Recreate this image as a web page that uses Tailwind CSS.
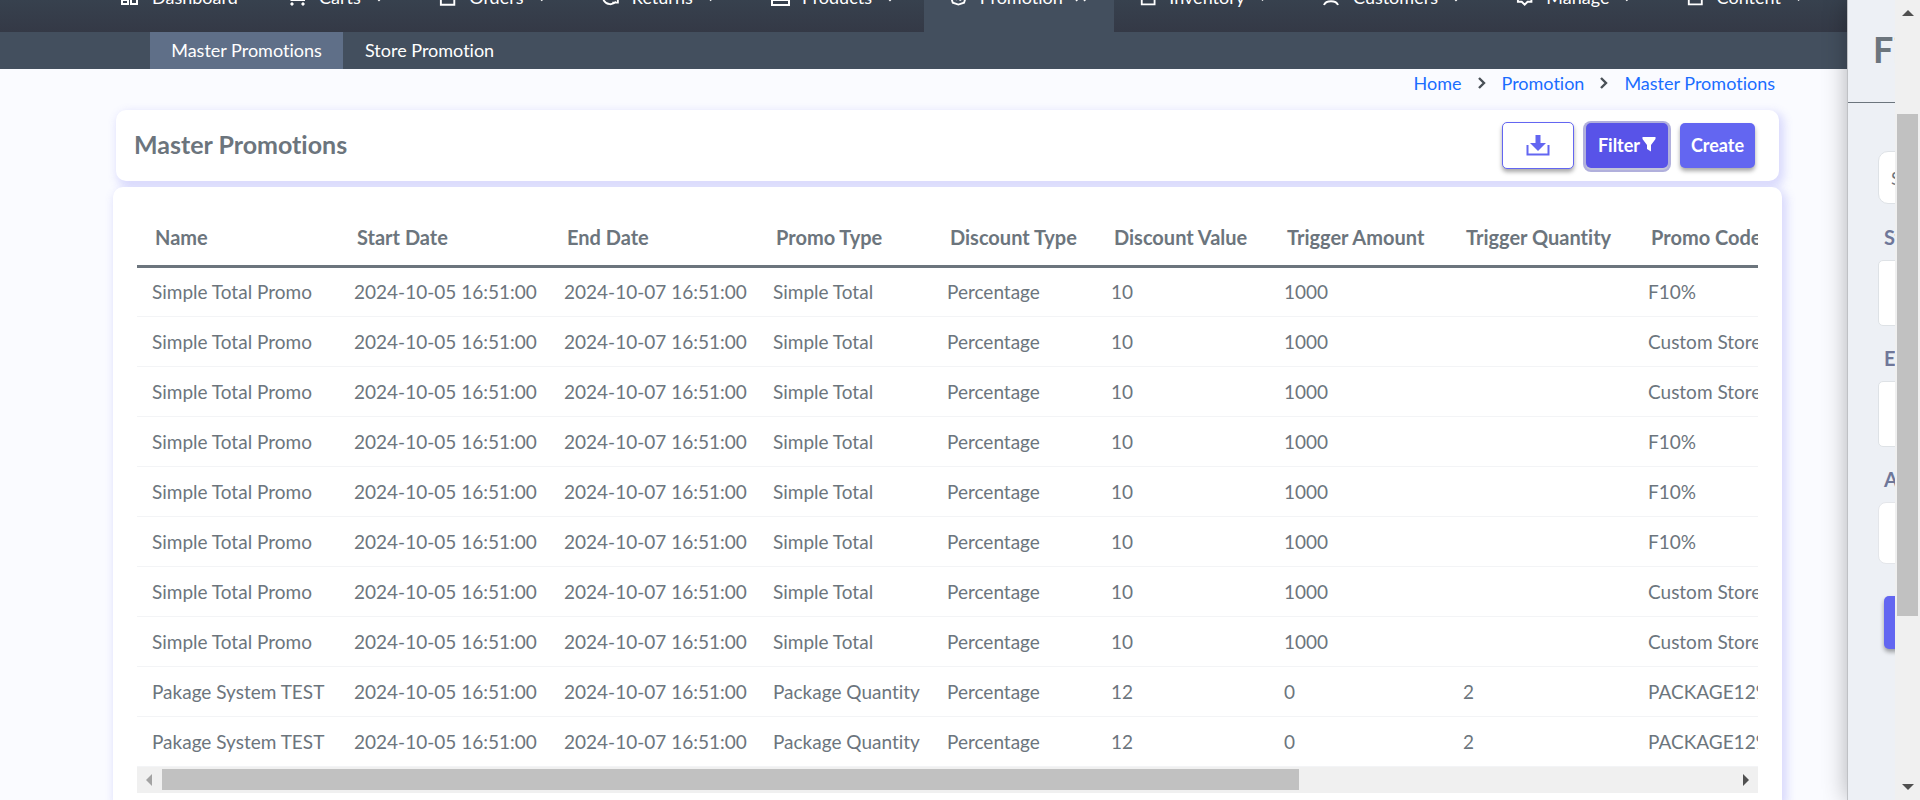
<!DOCTYPE html>
<html lang="en">
<head>
<meta charset="utf-8">
<title>Master Promotions</title>
<script src="https://cdn.jsdelivr.net/npm/@tailwindcss/browser@4"></script>
</head>
<body class="bg-[#fafbff] font-[Lato,'Open_Sans',sans-serif] text-lg text-[#6c757d] [font-variant-ligatures:none]">
<div class="flex h-screen overflow-hidden">
  <div class="min-w-0 flex-1 flex flex-col">
    <header class="shrink-0 text-white">
      <nav aria-label="Main" class="flex h-8 items-end overflow-hidden bg-linear-to-b from-[#37414e] to-[#343946] pl-[94px] leading-6">
        <a href="#" class="flex h-[70px] w-[168px] shrink-0 items-center gap-3 pl-[26px]">
          <svg class="size-5" viewBox="0 0 20 20" fill="none" stroke="currentColor" stroke-width="2"><path d="M2 2h6v8H2zM11 2h6v4h-6zM2 13h6v4H2zM11 9h6v8h-6z"/></svg><span>Dashboard</span></a>
        <a href="#" class="flex h-[70px] w-[151px] shrink-0 items-center gap-3 pl-[25px] pr-7">
          <svg class="size-5" viewBox="0 0 20 20" fill="none" stroke="currentColor" stroke-width="2"><path d="M1 1h3l3 9h8l3-7H5M7 10l-2 3h13"/><circle cx="5" cy="17" r="1.2" fill="currentColor" stroke-width="1"/><circle cx="16" cy="17" r="1.2" fill="currentColor" stroke-width="1"/></svg><span>Carts</span>
          <svg class="ml-auto h-[14px] w-3" viewBox="0 0 12 14" fill="none" stroke="currentColor" stroke-width="2"><path d="M1 5l5 5 5-5"/></svg></a>
        <a href="#" class="flex h-[70px] w-[162px] shrink-0 items-center gap-3 pl-[25px] pr-7">
          <svg class="size-5" viewBox="0 0 20 20" fill="none" stroke="currentColor" stroke-width="2"><path d="M3 5h14v13H3zM7 8V2h6v6"/></svg><span>Orders</span>
          <svg class="ml-auto h-[14px] w-3" viewBox="0 0 12 14" fill="none" stroke="currentColor" stroke-width="2"><path d="M1 5l5 5 5-5"/></svg></a>
        <a href="#" class="flex h-[70px] w-[169px] shrink-0 items-center gap-3 pl-[26px] pr-7">
          <svg class="size-5" viewBox="0 0 20 20" fill="none" stroke="currentColor" stroke-width="2"><path d="M16 15a8 8 0 1 1 2-5v7M18 16h-6"/></svg><span>Returns</span>
          <svg class="ml-auto h-[14px] w-3" viewBox="0 0 12 14" fill="none" stroke="currentColor" stroke-width="2"><path d="M1 5l5 5 5-5"/></svg></a>
        <a href="#" class="flex h-[70px] w-[180px] shrink-0 items-center gap-3 pl-[26px] pr-7">
          <svg class="size-5" viewBox="0 0 20 20" fill="none" stroke="currentColor" stroke-width="2"><path d="M2 13h17v5H2zM4 9h13M6 5h9"/></svg><span>Products</span>
          <svg class="ml-auto h-[14px] w-3" viewBox="0 0 12 14" fill="none" stroke="currentColor" stroke-width="2"><path d="M1 5l5 5 5-5"/></svg></a>
        <a href="#" aria-current="page" class="flex h-[70px] w-[190px] shrink-0 items-center gap-3 bg-[#434f5e] pl-[25px] pr-7">
          <svg class="size-5" viewBox="0 0 20 20" fill="none" stroke="currentColor" stroke-width="2"><path d="M10 2l3 1 3 1 1 3 1 3-1 3-1 3-3 1-3 1-3-1-3-1-1-3-1-3 1-3 1-3 3-1zM7 13l6-6M7 8h1M12 12v2"/></svg><span>Promotion</span>
          <svg class="ml-auto h-[14px] w-3" viewBox="0 0 12 14" fill="none" stroke="currentColor" stroke-width="2"><path d="M1 11l5-5 5 5"/></svg></a>
        <a href="#" class="flex h-[70px] w-[182px] shrink-0 items-center gap-3 pl-[25px] pr-7">
          <svg class="size-5" viewBox="0 0 20 20" fill="none" stroke="currentColor" stroke-width="2"><path d="M3 3h14v15H3zM7 3v5h6V3"/></svg><span>Inventory</span>
          <svg class="ml-auto h-[14px] w-3" viewBox="0 0 12 14" fill="none" stroke="currentColor" stroke-width="2"><path d="M1 5l5 5 5-5"/></svg></a>
        <a href="#" class="flex h-[70px] w-[194px] shrink-0 items-center gap-3 pl-[25px] pr-7">
          <svg class="size-5" viewBox="0 0 20 20" fill="none" stroke="currentColor" stroke-width="2"><circle cx="10" cy="6" r="4"/><path d="M3 18c2-5 12-5 14 0"/></svg><span>Customers</span>
          <svg class="ml-auto h-[14px] w-3" viewBox="0 0 12 14" fill="none" stroke="currentColor" stroke-width="2"><path d="M1 5l5 5 5-5"/></svg></a>
        <a href="#" class="flex h-[70px] w-[171px] shrink-0 items-center gap-3 pl-[25px] pr-7">
          <svg class="size-5" viewBox="0 0 20 20" fill="none" stroke="currentColor" stroke-width="2"><path d="M3 3h14v12h-4l-3 3-3-3H3zM10 10v3"/></svg><span>Manage</span>
          <svg class="ml-auto h-[14px] w-3" viewBox="0 0 12 14" fill="none" stroke="currentColor" stroke-width="2"><path d="M1 5l5 5 5-5"/></svg></a>
        <a href="#" class="flex h-[70px] w-[171px] shrink-0 items-center gap-3 pl-[25px] pr-7">
          <svg class="size-5" viewBox="0 0 20 20" fill="none" stroke="currentColor" stroke-width="2"><path d="M3 3h14v15H3zM7 3v5h6V3"/></svg><span>Content</span>
          <svg class="ml-auto h-[14px] w-3" viewBox="0 0 12 14" fill="none" stroke="currentColor" stroke-width="2"><path d="M1 5l5 5 5-5"/></svg></a>
      </nav>
      <nav aria-label="Promotion" class="flex h-[37px] bg-[#434f5e] pl-[150px] leading-9">
        <a href="#" class="w-[193px] bg-[#5f6f88] text-center">Master Promotions</a>
        <a href="#" class="px-[22px]">Store Promotion</a>
      </nav>
    </header>

    <main class="flex min-h-0 flex-1 flex-col pl-[113px] pr-[65px]">
      <nav aria-label="Breadcrumb" class="flex h-[41px] shrink-0 items-start justify-end gap-4 pr-[7px] leading-7 text-[#1a6dff]">
        <a href="#">Home</a>
        <svg class="mt-2 h-3 w-2" viewBox="0 0 8 12" fill="none" stroke="#495057" stroke-width="2.4"><path d="M1 1l5 5-5 5"/></svg>
        <a href="#">Promotion</a>
        <svg class="mt-2 h-3 w-2" viewBox="0 0 8 12" fill="none" stroke="#495057" stroke-width="2.4"><path d="M1 1l5 5-5 5"/></svg>
        <a href="#" aria-current="page">Master Promotions</a>
      </nav>

      <section class="mx-[3px] flex h-[71px] shrink-0 items-center justify-between rounded-[10px] bg-white pl-[18px] pr-6 shadow-[3px_4px_10px_2px_rgba(99,102,241,0.22)]">
        <h1 class="pb-[2px] text-[25px] font-bold">Master Promotions</h1>
        <div class="flex items-center gap-3 font-bold text-white">
          <button type="button" aria-label="Download" class="flex h-[47px] w-[72px] items-center justify-center rounded-[5px] border border-[#6366f1] bg-white text-[#6366f1] shadow-[0_3px_4px_rgba(0,0,0,0.35)]">
            <svg class="h-[22px] w-6" viewBox="0 0 24 22" fill="currentColor"><path d="M9.500 0h5v8H20l-8 8-8-8h5.500zM0.500 10h2v8.500h19V10h2v10.500h-23z"/></svg></button>
          <button type="button" class="flex h-[45px] w-[82px] items-center justify-center rounded-[5px] bg-[#5853e8] pb-[2px] shadow-[0_2px_0_#c3c5d8,0_1px_0_3px_#b1b0dc]">Filter<svg class="ml-[2px] h-[15px] w-[14px]" viewBox="0 0 14 15" fill="currentColor"><path d="M0.500 0h13v2L9 8v6.500L5 12V8L0.500 2z"/></svg></button>
          <button type="button" class="h-[45px] w-[75px] rounded-[5px] bg-[#6366f1] pb-[2px] shadow-[0_3px_4px_rgba(0,0,0,0.35)]">Create</button>
        </div>
      </section>

      <section class="mt-[6px] flex-1 rounded-t-[10px] bg-white px-6 pt-6 shadow-[3px_4px_10px_2px_rgba(99,102,241,0.22)]">
        <div class="overflow-hidden">
          <table class="w-[2242px] table-fixed border-collapse text-left text-[19px]">
            <colgroup><col class="w-[202px]"><col class="w-[210px]"><col class="w-[209px]"><col class="w-[174px]"><col class="w-[164px]"><col class="w-[173px]"><col class="w-[179px]"><col class="w-[185px]"><col></colgroup>
            <thead><tr class="h-[55px] border-b-3 border-[#6c757d] text-xl">
              <th class="pl-[18px] pb-[2px]">Name</th><th class="pl-[18px] pb-[2px]">Start Date</th><th class="pl-[18px] pb-[2px]">End Date</th><th class="pl-[18px] pb-[2px]">Promo Type</th><th class="pl-[18px] pb-[2px]">Discount Type</th><th class="pl-[18px] pb-[2px]">Discount Value</th><th class="pl-[18px] pb-[2px]">Trigger Amount</th><th class="pl-[18px] pb-[2px]">Trigger Quantity</th><th class="pl-[18px] pb-[2px]">Promo Code</th>
            </tr></thead>
            <tbody id="rows"></tbody>
          </table>
        </div>
        <div class="flex h-[26px] items-center bg-[#f0f0f0] px-[9px]" aria-hidden="true">
          <svg class="h-3 w-[6px]" viewBox="0 0 6 12" fill="#a3a3a3"><path d="M6 0v12L0 6z"/></svg>
          <div class="mx-[10px] flex-1"><div class="h-[21px] w-[72.400%] bg-[#c1c1c1]"></div></div>
          <svg class="h-3 w-[6px]" viewBox="0 0 6 12" fill="#505050"><path d="M0 0v12l6-6z"/></svg>
        </div>
      </section>
    </main>
  </div>

  <aside aria-label="Filter" class="z-10 w-12 shrink-0 overflow-hidden border-l border-[#bfc1c5] bg-[#edf0f5] shadow-[0_0_24px_rgba(0,0,0,0.3)]">
    <form class="w-[400px]">
      <div class="flex h-[103px] items-center border-b border-[#6c757d] pb-1 pl-[25px]">
        <h2 class="text-4xl font-bold">Filter</h2>
      </div>
      <div class="flex flex-col pl-[30px]">
        <input type="text" aria-label="Search" placeholder="Search" class="mt-12 h-[53px] w-[340px] rounded-[10px] border border-[#dee2e6] bg-white px-3 placeholder:text-[#6c757d]">
        <label for="start" class="mt-[18px] pl-[6px] text-xl leading-[30px] font-bold text-[#6f7799]">Start Date</label>
        <input id="start" type="text" class="mt-2 h-[66px] w-[340px] rounded-[5px] border border-[#dee2e6] bg-white px-4">
        <label for="end" class="mt-[17px] pl-[6px] text-xl leading-[30px] font-bold text-[#6f7799]">End Date</label>
        <input id="end" type="text" class="mt-2 h-[66px] w-[340px] rounded-[5px] border border-[#dee2e6] bg-white px-4">
        <label for="active" class="mt-[17px] pl-[6px] text-xl leading-[30px] font-bold text-[#6f7799]">Active</label>
        <input id="active" type="text" class="mt-2 h-[62px] w-[340px] rounded-[8px] border border-[#e4e6ea] bg-white px-4">
        <button type="submit" aria-label="Apply" class="mt-8 ml-[6px] h-[53px] w-[100px] rounded-[5px] bg-[#6366f1] shadow-[0_3px_4px_rgba(0,0,0,0.35)]"></button>
      </div>
    </form>
  </aside>

  <div class="z-10 flex w-[25px] shrink-0 flex-col items-center bg-[#f0f0f0] py-[10px]" aria-hidden="true">
    <svg class="h-[6px] w-3" viewBox="0 0 12 6" fill="#505050"><path d="M0 6h12L6 0z"/></svg>
    <div class="my-[10px] flex w-full flex-1 flex-col px-[2px] pt-[88px]"><div class="h-[76%] bg-[#c1c1c1]"></div></div>
    <svg class="h-[6px] w-3" viewBox="0 0 12 6" fill="#505050"><path d="M0 0h12L6 6z"/></svg>
  </div>
</div>
<script>
  const start = '2024-10-05 16:51:00', end = '2024-10-07 16:51:00';
  const total = code => ['Simple Total Promo', start, end, 'Simple Total', 'Percentage', '10', '1000', '', code];
  const pack = ['Pakage System TEST', start, end, 'Package Quantity', 'Percentage', '12', '0', '2', 'PACKAGE12%'];
  const data = ['F10%', 'Custom Store', 'Custom Store', 'F10%', 'F10%', 'F10%', 'Custom Store', 'Custom Store'].map(total).concat([pack, pack]);
  document.getElementById('rows').innerHTML = data.map(r =>
    '<tr class="h-[50px] border-b border-[#f3f4f6]">' + r.map(c => '<td class="pl-[15px] pt-px whitespace-nowrap">' + c + '</td>').join('') + '</tr>').join('');
</script>
</body>
</html>
